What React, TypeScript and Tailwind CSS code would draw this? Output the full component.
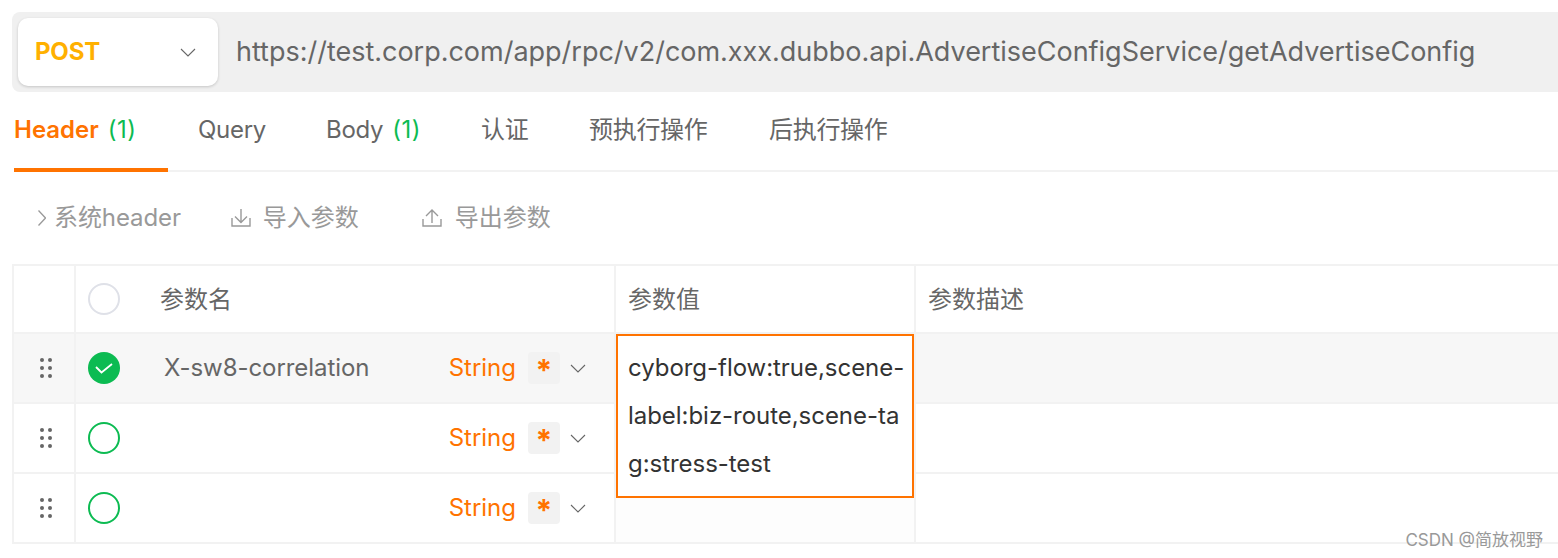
const FONT = "font-['Inter','Noto_Sans_CJK_SC',sans-serif]";

const TABS = [
    {label: "Query", width: "w-[128px]"},
    {label: "Body", count: "(1)", width: "w-[155px]"},
    {label: "认证", width: "w-[108px]"},
    {label: "预执行操作", width: "w-[180px]"},
    {label: "后执行操作", width: "w-[120px]"},
];

const Grip = () => (
    <svg width="12" height="20" viewBox="0 0 12 20" className="fill-[#666666]">
        <circle cx="2" cy="2" r="2" />
        <circle cx="10" cy="2" r="2" />
        <circle cx="2" cy="10" r="2" />
        <circle cx="10" cy="10" r="2" />
        <circle cx="2" cy="18" r="2" />
        <circle cx="10" cy="18" r="2" />
    </svg>
);

const Chevron = () => (
    <svg width="16" height="9" viewBox="0 0 16 9" fill="none" className="stroke-[#666666]">
        <path d="M1 1l7 7 7-7" strokeWidth="1.1" />
    </svg>
);

const ImportIcon = () => (
    <svg width="20" height="18" viewBox="0 0 20 18" fill="none" className="stroke-[#999999]">
        <path d="M10 0v13M4 7.5l6 6 6-6M1 9v8h18V9" strokeWidth="1.4" />
    </svg>
);

const ExportIcon = () => (
    <svg width="20" height="18" viewBox="0 0 20 18" fill="none" className="stroke-[#999999]">
        <path d="M10 14V1M4 7l6-6 6 6M1 10v7h18v-7" strokeWidth="1.4" />
    </svg>
);

const TypeCell = () => (
    <div className="flex items-center ml-auto">
        <span className="text-[24px] text-[#ff7300]">String</span>
        <span className="ml-[12px] w-[32px] h-[32px] rounded-[4px] bg-[#f2f2f2] flex items-start justify-center pt-[1px] text-[30px] font-bold leading-[34px] text-[#ff7300]">*</span>
        <span className="ml-[10px]"><Chevron /></span>
    </div>
);

const Row = ({name, checked, shaded}: {name?: string; checked?: boolean; shaded?: boolean}) => (
    <div className={`flex h-[70px] border-b-2 border-[#f2f2f2] ${shaded ? "bg-[#f7f7f7]" : ""}`}>
        <div className="w-[60px] flex items-center pl-[26px]">
            <Grip />
        </div>
        <div className="w-[540px] border-l-2 border-[#f2f2f2] flex items-center pl-[12px] pr-[28px]">
            {checked ? (
                <span className="w-[32px] h-[32px] rounded-full bg-[#0cbb52] flex items-center justify-center">
                    <svg width="18" height="11" viewBox="0 0 18 11" fill="none" className="stroke-white">
                        <path d="M1 4l5.5 5.5L17 1" strokeWidth="1.8" />
                    </svg>
                </span>
            ) : (
                <span className="w-[32px] h-[32px] rounded-full border-2 border-[#0cbb52]" />
            )}
            {name && <span className="ml-[44px] text-[24px] text-[#666666] tracking-[-0.06px]">{name}</span>}
            <TypeCell />
        </div>
        <div className="w-[300px] border-l-2 border-[#f2f2f2] bg-[#fdfdfd]" />
        <div className="flex-1 border-l-2 border-[#f2f2f2]" />
    </div>
);

export default function App() {
    return (
        <div className={`w-[1558px] h-[558px] bg-white overflow-hidden relative pt-[12px] pl-[12px] ${FONT}`}>
            <div className="h-[80px] bg-[#f0f0f0] rounded-l-[8px] flex items-center pl-[6px]">
                <div className="w-[200px] h-[68px] bg-white rounded-[10px] shadow-[0_1px_3px_rgba(0,0,0,0.18)] flex items-center pl-[17px] pr-[22px] justify-between">
                    <span className="text-[24px] font-bold text-[#ffb000] tracking-[-0.2px]">POST</span>
                    <Chevron />
                </div>
                <span className="ml-[18px] mt-[1px] text-[27px] text-[#666666] whitespace-nowrap tracking-[-0.012px]">https://test.corp.com/app/rpc/v2/com.xxx.dubbo.api.AdvertiseConfigService/getAdvertiseConfig</span>
            </div>

            <div className="flex h-[80px] ml-[2px] border-b-2 border-[#f2f2f2]">
                <div className="w-[154px] h-[80px] border-b-4 border-[#ff7300] pt-[21px] text-[24px] leading-[34px] whitespace-nowrap">
                    <span className="font-semibold text-[#ff7300]">Header</span>
                    <span className="ml-[9px] text-[#0cbb52] tracking-[0.5px]">(1)</span>
                </div>
                <div className="flex pl-[30px]">
                    {TABS.map((tab) => (
                        <div key={tab.label} className={`${tab.width} pt-[21px] text-[24px] leading-[34px] text-[#666666] whitespace-nowrap tracking-[-0.3px]`}>
                            {tab.label}
                            {tab.count && <span className="ml-[9px] text-[#0cbb52] tracking-[0.5px]">{tab.count}</span>}
                        </div>
                    ))}
                </div>
            </div>

            <div className="flex items-center h-[92px] text-[24px] text-[#999999] pl-[26px] whitespace-nowrap">
                <svg width="8" height="16" viewBox="0 0 8 16" fill="none" className="stroke-[#999999]">
                    <path d="M.5.5 7.5 8 .5 15.5" strokeWidth="1.3" />
                </svg>
                <span className="ml-[8px] tracking-[-0.1px]">系统header</span>
                <span className="ml-[50px]"><ImportIcon /></span>
                <span className="ml-[12px]">导入参数</span>
                <span className="ml-[63px]"><ExportIcon /></span>
                <span className="ml-[13px]">导出参数</span>
            </div>

            <div className="border-t-2 border-l-2 border-[#f2f2f2]">
                <div className="flex h-[68px] border-b-2 border-[#f2f2f2] text-[24px] text-[#666666]">
                    <div className="w-[60px]" />
                    <div className="w-[540px] border-l-2 border-[#f2f2f2] flex items-center pl-[12px]">
                        <span className="w-[32px] h-[32px] rounded-full border-2 border-[#dfe1e8]" />
                        <span className="ml-[40px] mt-[2px]">参数名</span>
                    </div>
                    <div className="w-[300px] border-l-2 border-[#f2f2f2] flex items-center pl-[12px] pt-[2px]">参数值</div>
                    <div className="flex-1 border-l-2 border-[#f2f2f2] flex items-center pl-[12px] pt-[2px]">参数描述</div>
                </div>
                <Row name="X-sw8-correlation" checked shaded />
                <Row />
                <Row />
            </div>

            <div className="absolute left-[616px] top-[334px] w-[298px] h-[164px] border-2 border-[#ff7300] bg-white pl-[10px] pt-[8px] text-[24px] leading-[48px] text-[#333333] whitespace-nowrap tracking-[-0.04px]">
                cyborg-flow:true,scene-<br />label:biz-route,scene-ta<br />g:stress-test
            </div>

            <div className="absolute right-[15px] top-[529px] text-[17px] leading-[22px] text-[#999999]">CSDN @简放视野</div>
        </div>
    );
}
